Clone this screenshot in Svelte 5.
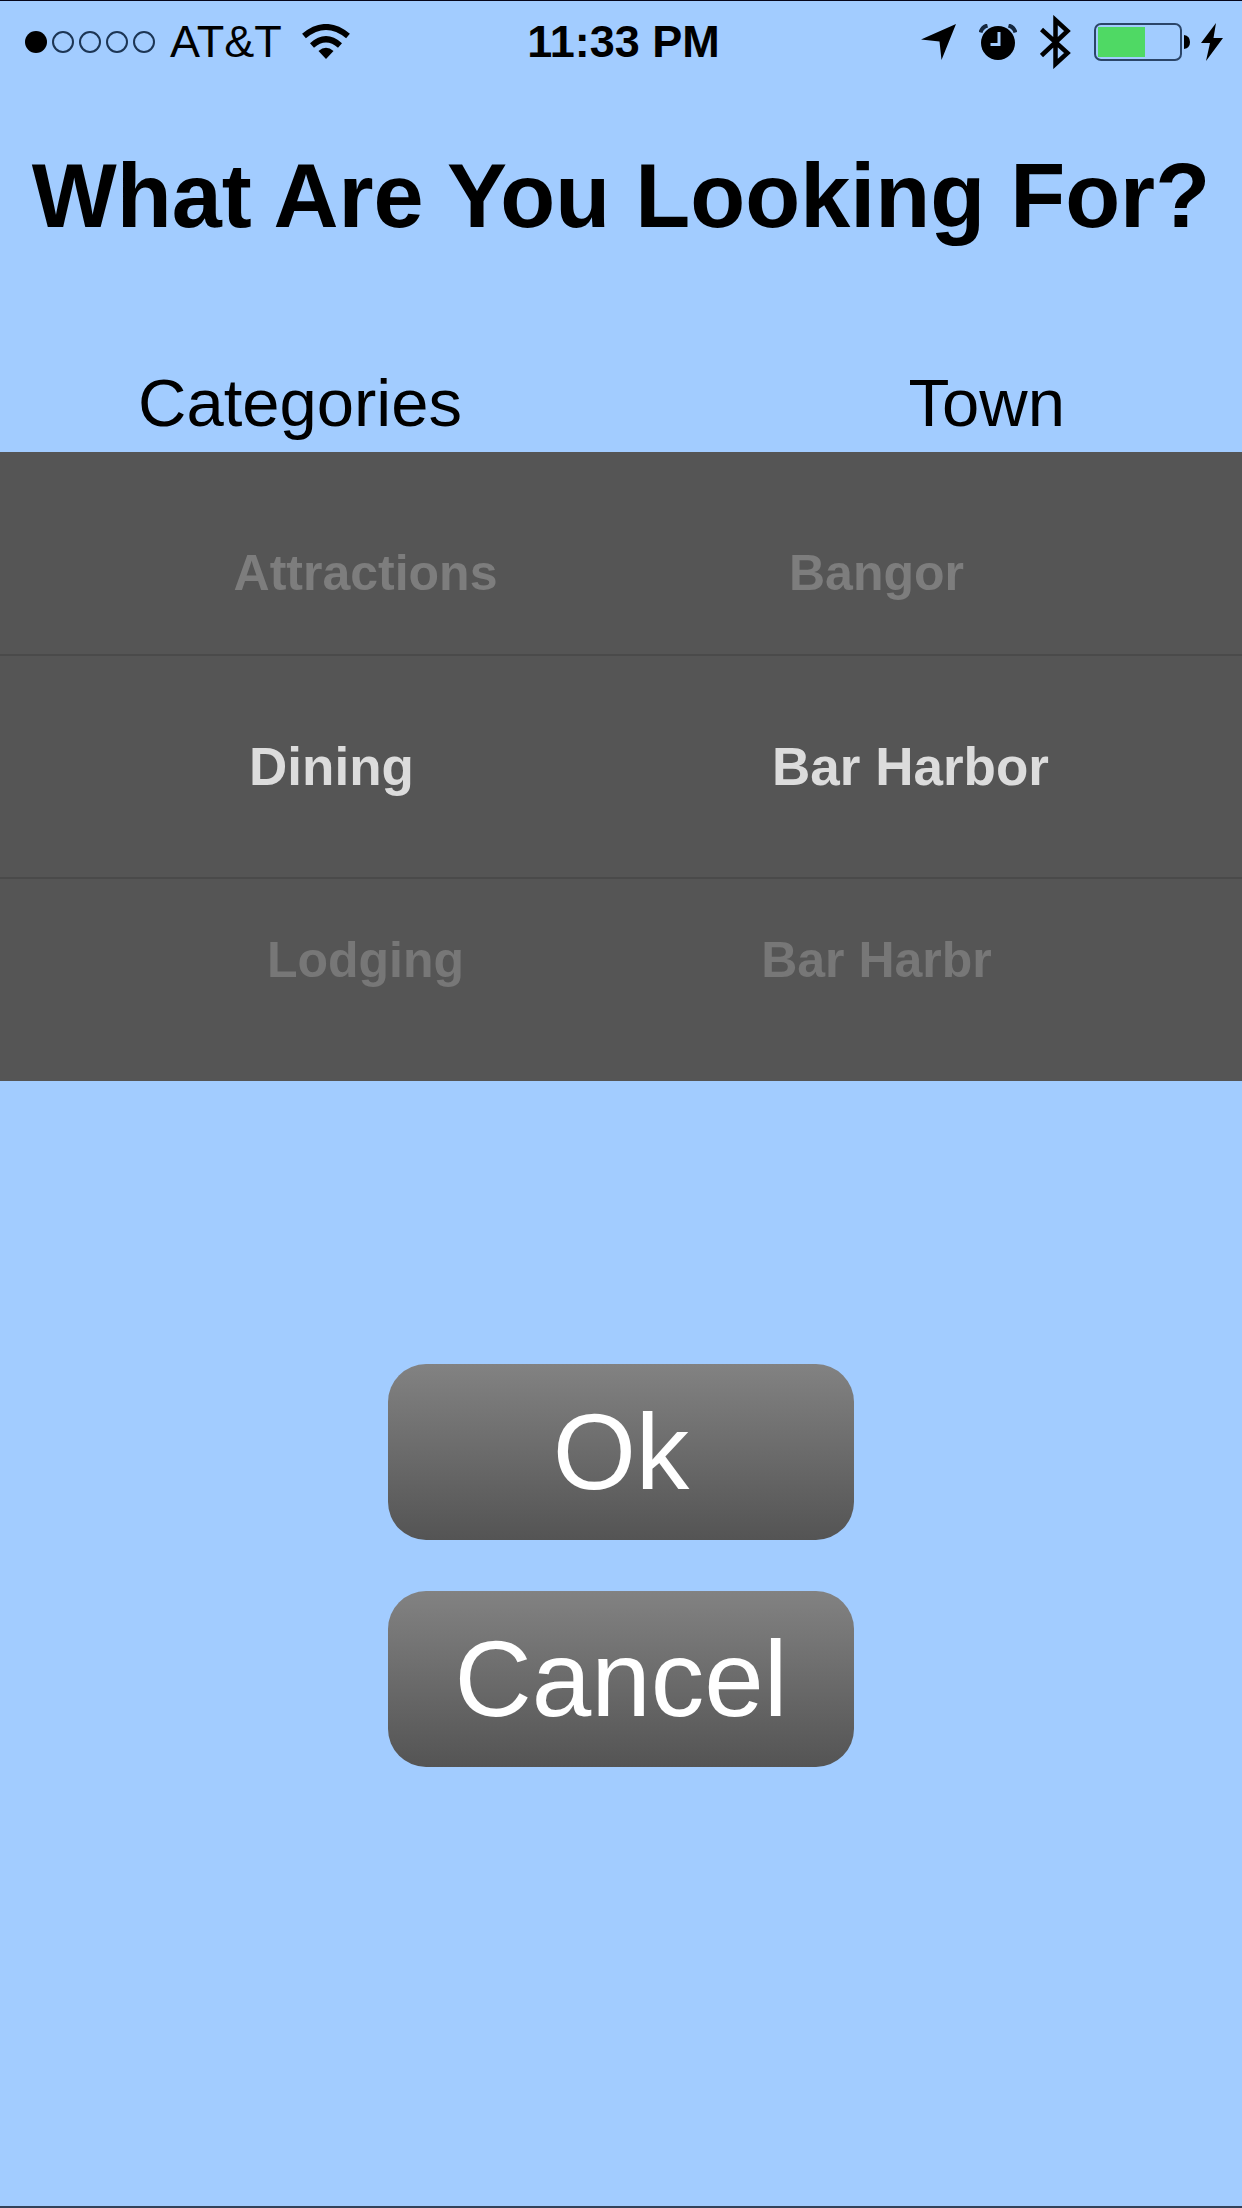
<script lang="ts">
  type Wheel = { name: string; options: string[]; selected: number };

  let wheels = $state<Wheel[]>([
    { name: 'Categories', options: ['Attractions', 'Dining', 'Lodging'], selected: 1 },
    { name: 'Town', options: ['Bangor', 'Bar Harbor', 'Bar Harbr'], selected: 1 }
  ]);

  const rows = [
    { offset: -1, kind: 'above' },
    { offset: 0, kind: 'current' },
    { offset: 1, kind: 'below' }
  ];

  const signal = [true, false, false, false, false];

  function pick(wheel: Wheel, offset: number) {
    wheel.selected += offset;
  }
</script>

<div class="screen">
  <header class="status">
    <div class="side">
      <svg class="dots" width="132" height="24" viewBox="0 0 132 24" aria-hidden="true">
        {#each signal as on, i}
          <circle cx={12 + i * 27} cy="12" r={on ? 11 : 10} class:on />
        {/each}
      </svg>
      <span class="carrier">AT&amp;T</span>
      <svg class="wifi" width="48" height="36" viewBox="0 0 48 36" aria-hidden="true">
        <path d="M2 12Q24 -6 46 12" />
        <path d="M10 21.500Q24 9 38 21.500" />
        <path class="solid" d="M16.500 27Q24 20.500 31.500 27L24 35Z" />
      </svg>
    </div>
    <span class="time">11:33 PM</span>
    <div class="side right">
      <svg width="35" height="36" viewBox="0 0 35 36" aria-hidden="true">
        <path d="M35 0L20.500 36L18.500 17.500L0 15.500Z" />
      </svg>
      <svg class="alarm" width="38" height="36" viewBox="0 0 38 36" aria-hidden="true">
        <circle cx="19" cy="19" r="17" />
        <path class="bell" d="M1.500 8.500Q3 3 8.500 1.500M36.500 8.500Q35 3 29.500 1.500" />
        <path class="hands" d="M20 8V20.500H11.500" />
      </svg>
      <svg class="bluetooth" width="31" height="54" viewBox="0 0 31 54" aria-hidden="true">
        <path d="M1.500 14.500L27.500 38L15.500 49V5L27.500 16L1.500 40.500" />
      </svg>
      <svg class="battery" width="96" height="38" viewBox="0 0 96 38" aria-hidden="true">
        <rect class="shell" x="1" y="1" width="86" height="36" rx="6" />
        <rect class="charge" x="4" y="4" width="47" height="30" />
        <path d="M90 12Q96 13 96 19T90 26Z" />
      </svg>
      <svg class="bolt" width="22" height="38" viewBox="0 0 22 38" aria-hidden="true">
        <path d="M15 0L0 20H9L5 38L22 15H12.500Z" />
      </svg>
    </div>
  </header>

  <main>
    <h1>What Are You Looking For?</h1>

    <div class="labels">
      {#each wheels as wheel}
        <span>{wheel.name}</span>
      {/each}
    </div>

    <div class="picker">
      {#each rows as row}
        <div class="row {row.kind}">
          {#each wheels as wheel}
            {@const option = wheel.options[wheel.selected + row.offset]}
            <div class="cell">
              {#if option}
                <button
                  type="button"
                  aria-label="{wheel.name}: {option}"
                  aria-pressed={row.offset === 0}
                  onclick={() => pick(wheel, row.offset)}>{option}</button
                >
              {/if}
            </div>
          {/each}
        </div>
      {/each}
    </div>

    <div class="actions">
      <button type="button">Ok</button>
      <button type="button">Cancel</button>
    </div>
  </main>
</div>

<style>
  :global(body) {
    margin: 0;
  }

  .screen {
    box-sizing: border-box;
    min-height: 100vh;
    border-top: 1px solid #06061a;
    border-bottom: 2px solid #33435a;
    background: #a2ccff;
    color: #000;
    font-family: 'Liberation Sans', Arial, Helvetica, sans-serif;
  }

  button {
    border: 0;
    font-family: inherit;
    cursor: pointer;
  }

  .status {
    display: grid;
    grid-template-columns: 1fr auto 1fr;
    align-items: center;
    height: 82px;
    padding: 0 19px 0 24px;
    font-size: 45px;
  }

  .side {
    display: flex;
    align-items: center;
  }

  .right {
    justify-content: flex-end;
    gap: 23px;
  }

  .dots circle {
    fill: none;
    stroke: #1c3554;
    stroke-width: 2;
  }

  .dots .on {
    fill: #000;
    stroke: none;
  }

  .carrier {
    margin: 0 20px 0 14px;
  }

  .time {
    font-weight: bold;
  }

  .wifi path {
    fill: none;
    stroke: #000;
    stroke-width: 6;
  }

  .wifi .solid {
    fill: #000;
    stroke: none;
  }

  .alarm path {
    fill: none;
    stroke: #16283f;
    stroke-width: 4;
  }

  .alarm .hands {
    stroke: #a2ccff;
    stroke-width: 3;
  }

  .bluetooth path {
    fill: none;
    stroke: #000;
    stroke-width: 4.5;
  }

  .battery .shell {
    fill: none;
    stroke: #2b4568;
    stroke-width: 2;
  }

  .battery .charge {
    fill: #4fd964;
  }

  .bolt {
    margin-left: -12px;
  }

  h1 {
    margin: 58px 0 0;
    font-size: 90px;
    line-height: 110px;
    text-align: center;
    white-space: nowrap;
  }

  .labels {
    display: flex;
    justify-content: space-between;
    padding: 114px 177px 11px 138px;
    font-size: 67px;
    line-height: 76px;
  }

  .picker {
    background: #555;
  }

  .row {
    display: grid;
    grid-template-columns: 1fr 1fr;
    align-items: center;
    box-sizing: border-box;
    height: 202px;
    padding: 0 110px;
  }

  .cell {
    text-align: center;
  }

  .row button {
    padding: 0;
    background: none;
    color: #7d7d7d;
    font-size: 50px;
    font-weight: bold;
    line-height: 60px;
  }

  .above {
    padding-top: 40px;
  }

  .below {
    padding-bottom: 40px;
  }

  .below button {
    color: #777;
  }

  .current {
    height: 225px;
    padding: 0 42px;
    border-top: 2px solid #4a4a4a;
    border-bottom: 2px solid #4a4a4a;
  }

  .current button {
    color: #dcdcdc;
    font-size: 53px;
  }

  .actions {
    display: flex;
    flex-direction: column;
    align-items: center;
    gap: 51px;
    padding: 283px 0 100px;
  }

  .actions button {
    width: 37.5%;
    padding: 26px 0;
    border-radius: 38px;
    background: linear-gradient(#828282, #545454);
    color: #fff;
    font-size: 107px;
    line-height: 124px;
  }
</style>
